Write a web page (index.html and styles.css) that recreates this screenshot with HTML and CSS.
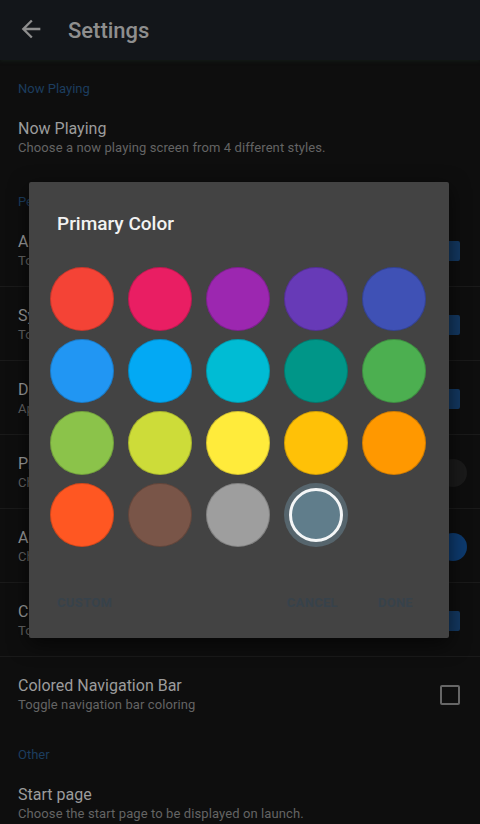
FILE: index.html
```html
<!DOCTYPE html>
<html lang="en">
  <head>
    <meta charset="UTF-8" />
    <meta name="viewport" content="width=device-width, initial-scale=1.0" />
    <title>Settings</title>
    <link rel="stylesheet" href="styles.css">
  </head>
  <body>
    <div class="toolbar">
      <svg class="back" viewBox="0 0 24 24" width="28" height="28">
        <path d="M20 11H7.83l5.59-5.59L12 4l-8 8 8 8 1.41-1.41L7.83 13H20v-2z" fill="#8e8e8e" />
      </svg>
      <span class="toolbar-title">Settings</span>
    </div>

    <div class="list">
      <div class="category">Now Playing</div>
      <div class="item last">
        <div class="text">
          <div class="title">Now Playing</div>
          <div class="summary">Choose a now playing screen from 4 different styles.</div>
        </div>
      </div>

      <div class="category">Personalize</div>
      <div class="item">
        <div class="text">
          <div class="title">Album art on lockscreen</div>
          <div class="summary">Toggle album art on lockscreen</div>
        </div>
        <span class="check on"></span>
      </div>
      <div class="item">
        <div class="text">
          <div class="title">Sync album art</div>
          <div class="summary">Toggle album art syncing</div>
        </div>
        <span class="check on"></span>
      </div>
      <div class="item">
        <div class="text">
          <div class="title">Dark theme</div>
          <div class="summary">Apply the dark theme</div>
        </div>
        <span class="check on"></span>
      </div>
      <div class="item">
        <div class="text">
          <div class="title">Primary color</div>
          <div class="summary">Choose the primary color</div>
        </div>
        <span class="dot dark"></span>
      </div>
      <div class="item">
        <div class="text">
          <div class="title">Accent color</div>
          <div class="summary">Choose the accent color</div>
        </div>
        <span class="dot blue"></span>
      </div>
      <div class="item">
        <div class="text">
          <div class="title">Colored Status Bar</div>
          <div class="summary">Toggle status bar coloring</div>
        </div>
        <span class="check on"></span>
      </div>
      <div class="item last">
        <div class="text">
          <div class="title">Colored Navigation Bar</div>
          <div class="summary">Toggle navigation bar coloring</div>
        </div>
        <span class="check"></span>
      </div>

      <div class="category other">Other</div>
      <div class="item last">
        <div class="text">
          <div class="title">Start page</div>
          <div class="summary">Choose the start page to be displayed on launch.</div>
        </div>
      </div>
    </div>

    <div class="dialog">
      <div class="dialog-title">Primary Color</div>
      <div class="swatches">
        <span class="swatch" style="background: #f44336"></span>
        <span class="swatch" style="background: #e91e63"></span>
        <span class="swatch" style="background: #9c27b0"></span>
        <span class="swatch" style="background: #673ab7"></span>
        <span class="swatch" style="background: #3f51b5"></span>
        <span class="swatch" style="background: #2196f3"></span>
        <span class="swatch" style="background: #03a9f4"></span>
        <span class="swatch" style="background: #00bcd4"></span>
        <span class="swatch" style="background: #009688"></span>
        <span class="swatch" style="background: #4caf50"></span>
        <span class="swatch" style="background: #8bc34a"></span>
        <span class="swatch" style="background: #cddc39"></span>
        <span class="swatch" style="background: #ffeb3b"></span>
        <span class="swatch" style="background: #ffc107"></span>
        <span class="swatch" style="background: #ff9800"></span>
        <span class="swatch" style="background: #ff5722"></span>
        <span class="swatch" style="background: #795548"></span>
        <span class="swatch" style="background: #9e9e9e"></span>
        <span class="swatch selected"><span class="ring"></span></span>
      </div>
      <div class="actions">
        <span class="btn">Custom</span>
        <span class="spacer"></span>
        <span class="btn">Cancel</span>
        <span class="btn">Done</span>
      </div>
    </div>
  </body>
</html>
```

FILE: styles.css
```css
body {
  margin: 0;
  background-color: #0e0e0e;
  font-family: Roboto, "Noto Sans", sans-serif;
  width: 480px;
  height: 824px;
  overflow: hidden;
  position: relative;
}
.toolbar {
  height: 60px;
  display: flex;
  align-items: center;
  background-color: #13161a;
  box-shadow: 0 2px 3px rgba(20, 30, 25, 0.6);
}
.back {
  margin-left: 17px;
  margin-top: -2px;
}
.toolbar-title {
  margin-left: 23px;
  font-size: 22px;
  font-weight: 500;
  color: #8e8e8e;
}
.category {
  padding: 20px 18px 2px;
  font-size: 13px;
  line-height: 18px;
  color: #1c3d5e;
}
.category.other {
  padding-top: 16px;
}
.item {
  display: flex;
  align-items: center;
  padding: 18px 18px 16px;
  border-bottom: 1px solid #1a1a1a;
}
.item.last {
  border-bottom: none;
}
.text {
  flex: 1;
}
.title {
  font-size: 16px;
  line-height: 21px;
  color: #9c9c9c;
}
.summary {
  font-size: 13px;
  line-height: 18px;
  letter-spacing: 0.1px;
  color: #646464;
}
.check {
  width: 16px;
  height: 16px;
  margin-right: 2px;
  border: 2px solid #666;
  border-radius: 2px;
}
.check.on {
  background-color: #133861;
  border-color: #133861;
}
.dot {
  width: 28px;
  height: 28px;
  border-radius: 50%;
  margin-right: -5px;
}
.dot.dark {
  background-color: #1a1a1a;
}
.dot.blue {
  background-color: #0d3a6e;
}
.dialog {
  position: absolute;
  left: 29px;
  top: 182px;
  width: 420px;
  height: 456px;
  box-sizing: border-box;
  padding: 30px 0 0;
  background-color: #434343;
  border-radius: 2px;
  box-shadow: 0 6px 20px rgba(0, 0, 0, 0.6);
}
.dialog-title {
  padding-left: 28px;
  font-size: 19px;
  line-height: 24px;
  font-weight: 500;
  color: #f2f2f2;
}
.swatches {
  display: grid;
  grid-template-columns: repeat(5, 64px);
  column-gap: 14px;
  row-gap: 8px;
  margin: 31px 0 0 21px;
}
.swatch {
  width: 64px;
  height: 64px;
  border-radius: 50%;
  box-sizing: border-box;
  box-shadow: inset 0 0 0 1px rgba(0, 0, 0, 0.18);
}
.swatch.selected {
  background-color: #56656d;
  padding: 5px;
  box-shadow: none;
}
.ring {
  display: block;
  width: 100%;
  height: 100%;
  box-sizing: border-box;
  border-radius: 50%;
  border: 3px solid #f4f6f7;
  background-color: #607d8b;
}
.actions {
  display: flex;
  margin-top: 48px;
  padding: 0 36px 0 28px;
}
.spacer {
  flex: 1;
}
.btn {
  font-size: 13px;
  line-height: 16px;
  font-weight: 700;
  letter-spacing: 0.3px;
  text-transform: uppercase;
  color: #37424b;
}
.btn + .btn {
  margin-left: 40px;
}
.spacer + .btn {
  margin-left: 0;
}
```
